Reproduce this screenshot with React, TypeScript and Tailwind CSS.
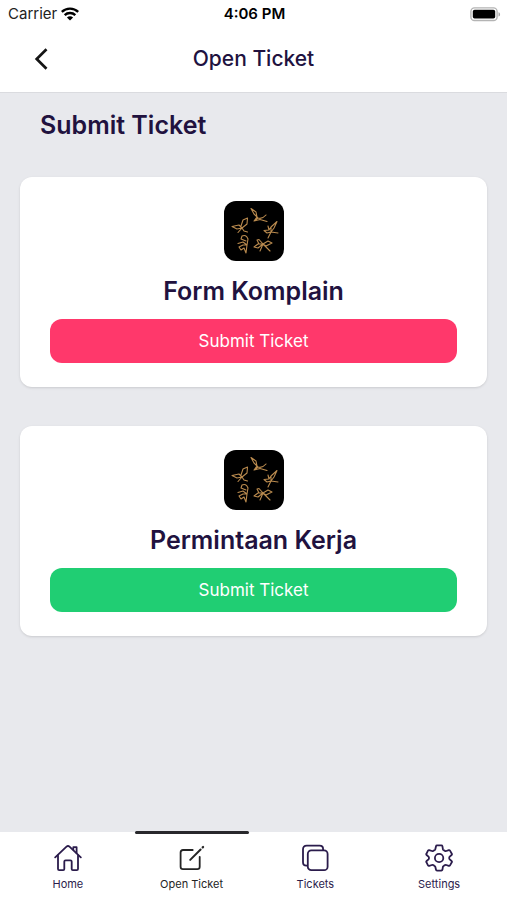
import type { ReactNode } from "react";

type TicketCardProps = {
  title: string;
  buttonClass: string;
};

type NavItem = {
  label: string;
  icon: ReactNode;
  active?: boolean;
};

function WifiIcon() {
  return (
    <svg width="18" height="14" viewBox="0 0 18 14" fill="none" stroke="#000" strokeWidth="2.4" aria-hidden="true">
      <path d="M0.8 4.9C5.3 0.5 12.7 0.5 17.2 4.9" />
      <path d="M3.7 8.1C6.6 5.3 11.4 5.3 14.3 8.1" />
      <path d="M9 13.6 5.9 10.5C7.6 8.9 10.4 8.9 12.1 10.5Z" fill="#000" stroke="none" />
    </svg>
  );
}

function BatteryIcon() {
  return (
    <svg width="31" height="15" viewBox="0 0 31 15" fill="none" aria-hidden="true">
      <rect x="0.9" y="0.9" width="26.2" height="12.6" rx="3.6" stroke="#b4b4b4" strokeWidth="1.4" />
      <rect x="2.8" y="2.8" width="22.4" height="8.8" rx="1.8" fill="#000" />
      <path d="M28.5 5.2C30.6 5.8 30.6 9 28.5 9.6Z" fill="#a8a8a8" />
    </svg>
  );
}

function HomeIcon() {
  return (
    <svg width="28" height="28" viewBox="0 0 28 28" fill="none" stroke="currentColor" strokeWidth="1.8" strokeLinecap="round" strokeLinejoin="round" aria-hidden="true">
      <path d="M1.2 13.4 12.5 2.6Q14 1.3 15.5 2.6L26.8 13.4" />
      <path d="M19.3 5.6V3.2H22.6V9" />
      <path d="M4 11.5V25Q4 26.2 5.2 26.2H9.2Q10.3 26.2 10.3 25V17.6Q10.3 16.3 11.6 16.3H16.4Q17.7 16.3 17.7 17.6V25Q17.7 26.2 18.8 26.2H22.8Q24 26.2 24 25V11.5" />
    </svg>
  );
}

function ComposeIcon() {
  return (
    <svg width="28" height="28" viewBox="0 0 28 28" fill="none" stroke="currentColor" strokeWidth="1.8" strokeLinecap="round" strokeLinejoin="round" aria-hidden="true">
      <path d="M14.7 6H5Q2.6 6 2.6 8.4V22.7Q2.6 25.1 5 25.1H19.3Q21.7 25.1 21.7 22.7V12.8" />
      <path d="M12.2 15.9 22.6 5.5" strokeWidth="2" />
      <path d="M24.7 3.4 25.1 3" strokeWidth="2.2" />
    </svg>
  );
}

function CopiesIcon() {
  return (
    <svg width="28" height="28" viewBox="0 0 28 28" fill="none" stroke="currentColor" strokeWidth="1.8" strokeLinejoin="round" aria-hidden="true">
      <rect x="6.8" y="6.4" width="19.8" height="19.8" rx="3.5" />
      <path d="M22.1 6.2V5Q22.1 1.6 18.7 1.6H5.7Q2 1.6 2 5.3V18.3Q2 21.7 5.4 21.7H6.4" />
    </svg>
  );
}

function GearIcon() {
  return (
    <svg width="28" height="28" viewBox="0 0 28 28" fill="none" stroke="currentColor" strokeWidth="1.8" strokeLinejoin="round" aria-hidden="true">
      <path d="M12 1.4H16.4Q17.2 1.4 17.4 2.2L17.9 5.2Q18.1 5.9 18.8 6.2L20 6.9Q20.6 7.2 21.3 7L23.8 6.1Q24.6 5.9 25 6.6L26.8 9.8Q27.2 10.5 26.6 11L24.7 12.7Q24.2 13.3 24.2 14T24.7 15.3L26.6 17Q27.2 17.5 26.8 18.2L25 21.4Q24.6 22.1 23.8 21.9L21.3 21Q20.6 20.8 20 21.1L18.8 21.8Q18.1 22.1 17.9 22.8L17.4 25.8Q17.2 26.6 16.4 26.6H12Q11.2 26.6 11 25.8L10.3 22.8Q10.1 22.1 9.4 21.8L8.2 21.1Q7.6 20.8 6.9 21L4.2 21.9Q3.4 22.1 3 21.4L1.4 18.2Q1 17.5 1.6 17L3.5 15.3Q4 14.7 4 14T3.5 12.7L1.6 11Q1 10.5 1.4 9.8L3 6.6Q3.4 5.9 4.2 6.1L6.9 7Q7.6 7.2 8.2 6.9L9.4 6.2Q10.1 5.9 10.3 5.2L11 2.2Q11.2 1.4 12 1.4Z" />
      <circle cx="14.1" cy="14" r="4.2" />
    </svg>
  );
}

// Five gold birds flying in a ring
function BirdsLogo() {
  return (
    <svg className="size-15 rounded-xl bg-black" viewBox="0 0 60 60" fill="none" stroke="#b98a4e" strokeWidth="1.1" strokeLinecap="round" strokeLinejoin="round" aria-hidden="true">
      <path d="M27 7.500 30 13 34 17Q38 18.500 42 14 M27 7.500 32 11 33 16 30 20 34 17 M30 20 36 18.500 43 20.500" />
      <path d="M8 25.500 15 24 18 27 23 23 23.500 17 19 19 17 25 M8 25.500 13 28 18 27 14 31.500 M18 27 20 30 23.500 31" />
      <path d="M40 29.500 45 29 47 26 53 20.500 50 27 47 31 54 32 M45 29 44 25 M47 26 47 31 44 37 M40 29.500 43 32 47 31" />
      <path d="M14 42.500 19 41 23 44 24 38Q22 33 18 35L17 38 22 40 M23 44 22 52 20 47 17 49 15 46 19 44 23 44" />
      <path d="M30 46 34 43 39 43 35 38.500 33 39 35 43 M39 43 44 40 48 42 42 45 39 43 46 50 M30 46 34 47 39 43 36 50" />
    </svg>
  );
}

function TicketCard({ title, buttonClass }: TicketCardProps) {
  return (
    <section className="flex flex-col items-center rounded-xl bg-white px-[30px] pt-6 pb-6 shadow-sm">
      <BirdsLogo />
      <h2 className="mt-2.5 text-[25px] leading-10 font-semibold">{title}</h2>
      <button type="button" className={`mt-2 h-11 w-full rounded-xl pt-0.5 text-[17px] text-white ${buttonClass}`}>
        Submit Ticket
      </button>
    </section>
  );
}

const navItems: NavItem[] = [
  { label: "Home", icon: <HomeIcon /> },
  { label: "Open Ticket", icon: <ComposeIcon />, active: true },
  { label: "Tickets", icon: <CopiesIcon /> },
  { label: "Settings", icon: <GearIcon /> },
];

export default function App() {
  return (
    <div className="flex min-h-screen flex-col bg-[#e8e9ed] font-['Inter','Open_Sans',sans-serif] text-[#21123f]">
      <div className="grid h-7 grid-cols-3 items-center bg-white pr-1.5 pl-2 text-[15px] text-[#222]">
        <div className="flex items-center gap-1">
          <span>Carrier</span>
          <WifiIcon />
        </div>
        <span className="text-center font-semibold text-black">4:06 PM</span>
        <div className="flex justify-end">
          <BatteryIcon />
        </div>
      </div>

      <header className="grid h-[65px] grid-cols-[80px_1fr_80px] items-center border-b border-[#dadbdf] bg-white pb-0.5">
        <button type="button" aria-label="Back" className="flex h-10 items-center pl-[34px] text-[#151515]">
          <svg width="14" height="22" viewBox="0 0 14 22" fill="none" stroke="currentColor" strokeWidth="2.7" aria-hidden="true">
            <path d="M12.5 1.2 2.7 11 12.5 20.8" />
          </svg>
        </button>
        <h1 className="text-center text-[21px] font-medium">Open Ticket</h1>
      </header>

      <main className="flex-1 px-5 pt-3">
        <h2 className="pl-5 text-[25px] leading-10 font-semibold">Submit Ticket</h2>
        <div className="mt-8 flex flex-col gap-[39px]">
          <TicketCard title="Form Komplain" buttonClass="bg-[#ff386b]" />
          <TicketCard title="Permintaan Kerja" buttonClass="bg-[#20ce73]" />
        </div>
      </main>

      <nav className="grid h-[68px] grid-cols-4 bg-white px-1.5">
        {navItems.map((item) => (
          <a
            key={item.label}
            href="#"
            aria-current={item.active ? "page" : undefined}
            className={`relative flex flex-col items-center gap-0.5 pt-3 text-[11px] leading-5 ${item.active ? "text-[#242424]" : "text-[#2b1c4c]"}`}
          >
            {item.active ? <span className="absolute inset-x-[5px] -top-px h-[3px] rounded-full bg-[#28282c]" /> : null}
            {item.icon}
            <span>{item.label}</span>
          </a>
        ))}
      </nav>
    </div>
  );
}
